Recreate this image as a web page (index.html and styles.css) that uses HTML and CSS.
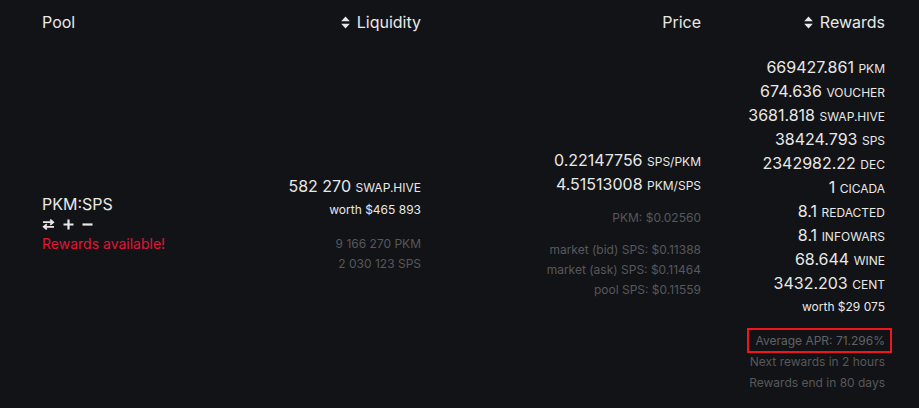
FILE: index.html
```html
<!DOCTYPE html>
<html lang="en">
<head>
    <meta charset="UTF-8">
    <title>Pools</title>
    <link rel="stylesheet" href="styles.css">
</head>
<body>
<table class="pools">
  <colgroup>
    <col class="col-pool">
    <col class="col-liq">
    <col class="col-price">
    <col class="col-rewards">
  </colgroup>
  <thead>
    <tr>
      <th class="left">Pool</th>
      <th><span class="sort"><svg width="9" height="13" viewBox="0 0 9 13"><path d="M4.5 0.5 L8.8 5.2 H0.2 Z M4.5 12.5 L8.8 7.8 H0.2 Z" fill="#e8e8e8"/></svg></span>Liquidity</th>
      <th>Price</th>
      <th><span class="sort"><svg width="9" height="13" viewBox="0 0 9 13"><path d="M4.5 0.5 L8.8 5.2 H0.2 Z M4.5 12.5 L8.8 7.8 H0.2 Z" fill="#e8e8e8"/></svg></span>Rewards</th>
    </tr>
  </thead>
  <tbody>
    <tr>
      <td class="left">
        <div class="big">PKM:SPS</div>
        <div class="actions">
          <svg width="13" height="11" viewBox="0 0 13 11"><path d="M1 3.2 H11 M8.2 0.6 L11.2 3.2 L8.2 5.8 M12 7.8 H2 M4.8 5.2 L1.8 7.8 L4.8 10.4" fill="none" stroke="#e8e8e8" stroke-width="1.8"/></svg>
          <svg width="11" height="11" viewBox="0 0 11 11"><path d="M5.5 0.5 V10.5 M0.5 5.5 H10.5" stroke="#e8e8e8" stroke-width="2.2"/></svg>
          <svg width="11" height="11" viewBox="0 0 11 11"><path d="M0.5 5.5 H10.5" stroke="#e8e8e8" stroke-width="2.2"/></svg>
        </div>
        <div class="alert">Rewards available!</div>
      </td>
      <td>
        <div class="big">582 270 <span class="unit">SWAP.HIVE</span></div>
        <div class="worth">worth $465 893</div>
        <div class="muted gap">9 166 270 PKM</div>
        <div class="muted">2 030 123 SPS</div>
      </td>
      <td>
        <div class="big">0.22147756 <span class="unit">SPS/PKM</span></div>
        <div class="big">4.51513008 <span class="unit">PKM/SPS</span></div>
        <div class="muted gap">PKM: $0.02560</div>
        <div class="muted gap">market (bid) SPS: $0.11388</div>
        <div class="muted">market (ask) SPS: $0.11464</div>
        <div class="muted">pool SPS: $0.11559</div>
      </td>
      <td>
        <div class="big">669427.861 <span class="unit">PKM</span></div>
        <div class="big">674.636 <span class="unit">VOUCHER</span></div>
        <div class="big">3681.818 <span class="unit">SWAP.HIVE</span></div>
        <div class="big">38424.793 <span class="unit">SPS</span></div>
        <div class="big">2342982.22 <span class="unit">DEC</span></div>
        <div class="big">1 <span class="unit">CICADA</span></div>
        <div class="big">8.1 <span class="unit">REDACTED</span></div>
        <div class="big">8.1 <span class="unit">INFOWARS</span></div>
        <div class="big">68.644 <span class="unit">WINE</span></div>
        <div class="big">3432.203 <span class="unit">CENT</span></div>
        <div class="worth">worth $29 075</div>
        <div class="muted apr-line"><span class="apr">Average APR: 71.296%</span></div>
        <div class="muted foot">Next rewards in 2 hours</div>
        <div class="muted foot">Rewards end in 80 days</div>
      </td>
    </tr>
  </tbody>
</table>
</body>
</html>
```

FILE: styles.css
```css
body {
  margin: 0;
  background-color: #121316;
  color: #e8e8e8;
  font-family: Inter, "Noto Sans", sans-serif;
  overflow: hidden;
}

.pools {
  margin-left: 27px;
  width: 873px;
  border-collapse: collapse;
  table-layout: fixed;
}

.col-pool { width: 199px; }
.col-liq { width: 210px; }
.col-price { width: 280px; }
.col-rewards { width: 184px; }

th {
  font-weight: 400;
  font-size: 16px;
  line-height: 24px;
  padding: 10px 15px;
  text-align: right;
}

td {
  padding: 11px 15px;
  text-align: right;
  vertical-align: middle;
}

.left {
  text-align: left;
}

.sort {
  display: inline-block;
  margin-right: 7px;
  vertical-align: -1px;
}

.sort svg {
  display: block;
}

.big {
  font-size: 16px;
  line-height: 24px;
  height: 24px;
  white-space: nowrap;
}

.left .big {
  height: 21px;
  line-height: 21px;
}

.unit {
  font-size: 12px;
  line-height: 1;
}

.worth {
  font-size: 12px;
  line-height: 24px;
}

.muted {
  color: #56585c;
  font-size: 12px;
  line-height: 20px;
  white-space: nowrap;
}

.gap {
  margin-top: 12px;
}

.actions {
  display: flex;
  gap: 8px;
  align-items: center;
  height: 19px;
}

.alert {
  color: #e31337;
  font-size: 14px;
  line-height: 20px;
}

.apr-line {
  margin-top: 12px;
}

.foot {
  line-height: 21px;
}

.apr {
  display: inline-block;
  border: 2px solid #f0161d;
  padding: 1px 5px 0 6px;
  margin: -3px -7px -2px 0;
  color: #606266;
}
```
